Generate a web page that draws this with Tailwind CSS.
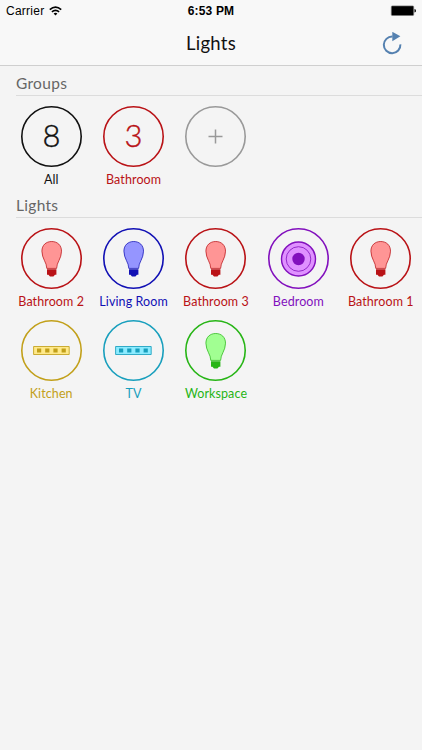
<!DOCTYPE html>
<html lang="en">
<head>
<meta charset="utf-8">
<title>Lights</title>
<script src="https://cdn.jsdelivr.net/npm/@tailwindcss/browser@4"></script>
</head>
<body class="h-[750px] w-[422px] overflow-hidden bg-[#f4f4f4] font-['Lato',sans-serif]">
<svg class="hidden">
  <symbol id="bulb" viewBox="0 0 61 61">
    <path d="M25.8 40.4C25.8 34.4 20.9 30.6 20.9 23.2C20.9 17.2 25 13.5 30.7 13.5S40.5 17.2 40.5 23.2C40.5 30.6 35.6 34.4 35.6 40.4Z" fill="var(--fill)" stroke="currentColor" stroke-opacity=".75"/>
    <path d="M26 41.2H35.4V46.8H34L32.4 48.6H29L27.4 46.8H26Z" fill="currentColor"/>
  </symbol>
  <symbol id="strip" viewBox="0 0 61 61">
    <path d="M12.6 26.5H48.2V34.5H12.6Z" fill="var(--fill)" stroke="currentColor" stroke-opacity=".85"/>
    <path d="M16 28.5h4.2v4h-4.2zM24.2 28.5h4.2v4h-4.2zM32.4 28.5h4.2v4h-4.2zM40.6 28.5h4.2v4h-4.2z" fill="currentColor"/>
  </symbol>
  <symbol id="disc" viewBox="0 0 61 61">
    <circle cx="30.5" cy="31" r="17" fill="var(--fill)" stroke="currentColor" stroke-width="1.4"/>
    <circle cx="30.5" cy="31" r="12.3" fill="none" stroke="currentColor" stroke-width=".8"/>
    <circle cx="30.5" cy="31" r="6.2" fill="currentColor"/>
  </symbol>
</svg>

<header class="h-[66px] border-b border-[#cfcfcf] bg-[#f8f8f8] text-black">
  <div class="grid h-[22px] grid-cols-3 items-center pr-[6px] pl-[6px] font-['Liberation_Sans',sans-serif] text-[12px] leading-[22px]">
    <div class="flex items-center gap-[5px]"><span class="tracking-[0.25px]">Carrier</span>
      <svg class="h-[10px] w-[13px]" viewBox="0 0 13 10" fill="none" stroke="currentColor" stroke-width="1.7"><path d="M.8 3.6Q6.5-1.5 12.2 3.6M2.9 5.9Q6.5 2.8 10.1 5.9"/><path d="M4.6 7.5Q6.5 6 8.4 7.5L6.5 9.5Z" fill="currentColor" stroke="none"/></svg>
    </div>
    <div class="text-center font-bold tracking-[0.15px]">6:53 PM</div>
    <svg class="h-[12px] w-[26px] justify-self-end" viewBox="0 0 26 12"><rect x="1.3" y=".9" width="22.4" height="9.6" rx="1" stroke="#777" stroke-width=".7"/><path d="M24.5 4Q26 4 26 5.7T24.5 7.4Z"/></svg>
  </div>
  <div class="grid h-[43px] grid-cols-[1fr_auto_1fr] items-center pr-[19px] pl-[19px]">
    <span></span>
    <h1 class="text-[18.5px] leading-[43px] tracking-[0.3px] text-[#111]">Lights</h1>
    <svg class="h-[24px] w-[22px] justify-self-end" viewBox="0 0 22 24"><path d="M19.4 12.4A8.3 8.3 0 1 1 11.5 4.6" fill="none" stroke="#5581b0" stroke-width="2"/><path d="M11.3 -.2L19.4 4.3L11.3 9.2Z" fill="#5581b0"/></svg>
  </div>
</header>

<main>
  <section class="h-[122px]">
    <h2 class="ml-[16px] h-[30px] border-b border-[#dcdcdc] text-[15.5px] leading-[34px] tracking-[0.3px] text-[#666]">Groups</h2>
    <div id="groups" class="grid grid-cols-5 pt-[10px] pl-[10px] text-[12.5px] leading-[25px] tracking-[0.1px]"></div>
  </section>
  <section>
    <h2 class="ml-[16px] h-[30px] border-b border-[#dcdcdc] text-[15.5px] leading-[34px] tracking-[0.3px] text-[#666]">Lights</h2>
    <div id="lights" class="grid auto-rows-[92px] grid-cols-5 pt-[10px] pl-[10px] text-[12.5px] leading-[25px] tracking-[0.1px]"></div>
  </section>
</main>
<script>
const tile = (name, color, fill, inner) =>
  `<div class="flex flex-col items-center" style="color:${color};--fill:${fill}">
    <svg class="size-[61px]" viewBox="0 0 61 61"><circle cx="30.5" cy="30.5" r="29.7" fill="none" stroke="currentColor" stroke-width="1.6"/>${inner}</svg>
    <span class="whitespace-nowrap">${name}</span>
  </div>`;
const count = (n) => `<text x="30.5" y="41" text-anchor="middle" font-size="31" letter-spacing="0" class="font-light" fill="currentColor" stroke="currentColor" stroke-width=".4">${n}</text>`;
const groups = [
  ['All', '#111', 'none', count(8)],
  ['Bathroom', '#b91216', 'none', count(3)],
  ['', '#999', 'none', '<path d="M30.5 23.5V37.5M23.5 30.5H37.5" stroke="currentColor" stroke-width="1.5"/>'],
];
const lights = [
  ['Bathroom 2', 'bulb', '#b91216', '#ff9595'],
  ['Living Room', 'bulb', '#1110b4', '#9595ff'],
  ['Bathroom 3', 'bulb', '#b91216', '#ff9595'],
  ['Bedroom', 'disc', '#8210bd', '#df91ff'],
  ['Bathroom 1', 'bulb', '#b91216', '#ff9595'],
  ['Kitchen', 'strip', '#c2a01a', '#ffe989'],
  ['TV', 'strip', '#189fbd', '#8bebff'],
  ['Workspace', 'bulb', '#27b516', '#a1ff92'],
];
document.getElementById('groups').innerHTML = groups.map((g) => tile(...g)).join('');
document.getElementById('lights').innerHTML = lights.map(([name, icon, color, fill]) =>
  tile(name, color, fill, `<use href="#${icon}" width="61" height="61"/>`)).join('');
</script>
</body>
</html>
